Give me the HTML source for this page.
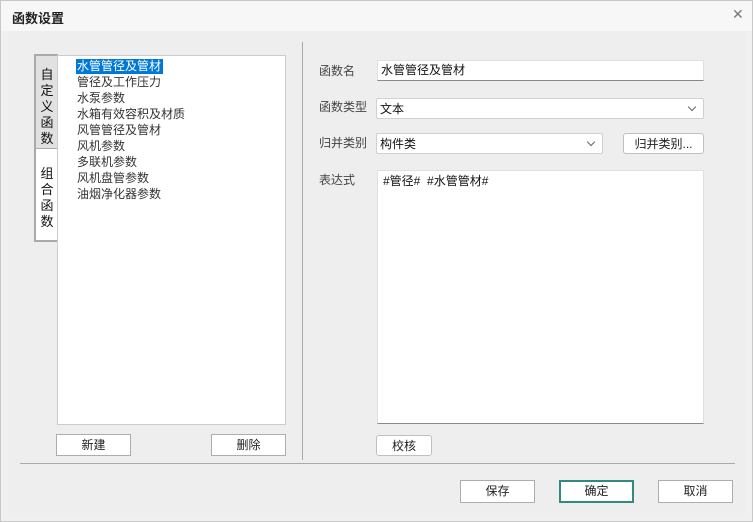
<!DOCTYPE html>
<html><head><meta charset="utf-8"><style>
*{box-sizing:border-box;margin:0;padding:0}
body{width:753px;height:522px;overflow:hidden;background:#f0f0f0;font-family:"Liberation Sans","Noto Sans CJK SC","WenQuanYi Zen Hei",sans-serif;font-size:12px;color:#333;position:relative}
.a{position:absolute}
.win{left:0;top:0;width:753px;height:522px;border:1px solid #c8c8c8}
.title{left:1px;top:1px;width:751px;height:30px;background:#f7f7f7}
.inner{left:8px;top:31px;width:737px;height:484px;background:#eeeeee}
.btn{background:#fff;border:1px solid #adadad;text-align:center;font-size:12px;color:#222;line-height:20px}
.lbl{font-size:12px;color:#444}
.field{background:#fff;border:1px solid #e0e0e0;border-bottom:1px solid #8a8a8a;font-size:12px;color:#111;padding-left:3px;line-height:19px}
.sel{background:#fff;border:1px solid #d0d0d0;border-radius:2px;font-size:12px;color:#111;padding-left:3px;line-height:20px}
.sel::after{content:"";position:absolute;right:8px;top:5px;width:5px;height:5px;border-right:1px solid #666;border-bottom:1px solid #666;transform:rotate(45deg)}
.li{left:77px;font-size:12px;color:#333;line-height:16px;height:16px}
.tab{font-size:13px;color:#111;line-height:16px;text-align:center}
</style></head><body>
<div class="a win"></div>
<div class="a title"></div>
<div class="a" style="left:12px;top:8px;font-size:13px;font-weight:bold;color:#222">函数设置</div>
<div class="a" style="left:732px;top:6px;font-size:14px;color:#777">✕</div>
<div class="a inner"></div>

<div class="a" style="left:34px;top:54px;width:24px;height:96px;background:#e1e1e1;border:2px solid #aaa;border-right:none"></div>
<div class="a tab" style="left:36px;top:67px;width:22px">自<br>定<br>义<br>函<br>数</div>
<div class="a" style="left:34px;top:149px;width:24px;height:93px;background:#fff;border:2px solid #aaa;border-right:none;border-top:none"></div>
<div class="a tab" style="left:36px;top:166px;width:22px">组<br>合<br>函<br>数</div>

<div class="a" style="left:57px;top:55px;width:229px;height:370px;background:#fff;border:1px solid #ccc"></div>
<div class="a" style="left:76px;top:59px;width:87px;height:15px;background:#0078d7"></div>
<div class="a li" style="top:58px;color:#fff">水管管径及管材</div>
<div class="a li" style="top:74px">管径及工作压力</div>
<div class="a li" style="top:90px">水泵参数</div>
<div class="a li" style="top:106px">水箱有效容积及材质</div>
<div class="a li" style="top:122px">风管管径及管材</div>
<div class="a li" style="top:138px">风机参数</div>
<div class="a li" style="top:154px">多联机参数</div>
<div class="a li" style="top:170px">风机盘管参数</div>
<div class="a li" style="top:186px">油烟净化器参数</div>

<div class="a btn" style="left:56px;top:434px;width:75px;height:22px">新建</div>
<div class="a btn" style="left:211px;top:434px;width:75px;height:22px">删除</div>

<div class="a" style="left:302px;top:42px;width:1px;height:418px;background:#aaa"></div>

<div class="a lbl" style="left:319px;top:62px">函数名</div>
<div class="a field" style="left:377px;top:60px;width:327px;height:21px">水管管径及管材</div>
<div class="a lbl" style="left:319px;top:98px">函数类型</div>
<div class="a sel" style="left:376px;top:98px;width:328px;height:21px">文本</div>
<div class="a lbl" style="left:319px;top:134px">归并类别</div>
<div class="a sel" style="left:376px;top:133px;width:227px;height:21px">构件类</div>
<div class="a btn" style="left:623px;top:133px;width:81px;height:21px;border-radius:3px;border-color:#c0c0c0">归并类别...</div>
<div class="a lbl" style="left:319px;top:171px">表达式</div>
<div class="a field" style="left:377px;top:170px;width:327px;height:254px;padding:1px 0 0 5px">#管径# &nbsp;#水管管材#</div>
<div class="a btn" style="left:376px;top:435px;width:56px;height:21px;border-radius:3px;border-color:#c0c0c0">校核</div>

<div class="a" style="left:20px;top:463px;width:715px;height:1px;background:#aaa"></div>
<div class="a btn" style="left:460px;top:480px;width:75px;height:23px;line-height:21px">保存</div>
<div class="a btn" style="left:559px;top:480px;width:75px;height:23px;border:2px solid #2e8b7f;line-height:19px">确定</div>
<div class="a btn" style="left:658px;top:480px;width:75px;height:23px;line-height:21px">取消</div>
</body></html>
